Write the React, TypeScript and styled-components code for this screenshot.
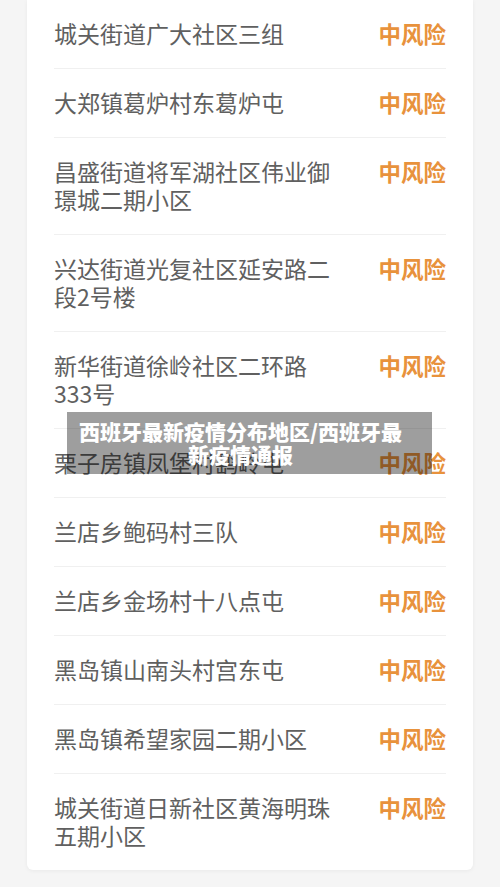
import { createGlobalStyle, styled } from 'styled-components'

const GlobalStyle = createGlobalStyle`
  html, body {
    margin: 0;
    padding: 0;
    background: #f5f5f5;
  }
  body {
    font-family: 'Noto Sans CJK SC', 'Noto Sans', sans-serif;
  }
`

const Page = styled.div`
  position: relative;
  width: 500px;
  height: 887px;
  overflow: hidden;
  background: #f5f5f5;
`

const Card = styled.div`
  margin: 0 27px;
  padding: 0 27px;
  background: #ffffff;
  border-radius: 0 0 6px 6px;
  box-shadow: 0 1px 4px rgba(0, 0, 0, 0.05);
`

const Row = styled.div<{ $last?: boolean }>`
  display: flex;
  justify-content: space-between;
  align-items: flex-start;
  padding: 19px 0 21px;
  border-bottom: ${({ $last }) => ($last ? 'none' : '1px solid #f0f0f0')};
`

const Place = styled.div`
  max-width: 285px;
  font-size: 23px;
  line-height: 28px;
  color: #606060;
`

const Risk = styled.div`
  flex-shrink: 0;
  font-size: 22.5px;
  line-height: 28px;
  font-weight: 700;
  color: #e8923c;
`

const Caption = styled.div`
  position: absolute;
  left: 67px;
  top: 412px;
  width: 365px;
  height: 62px;
  box-sizing: border-box;
  padding: 8px 22px 0 4px;
  background: rgba(0, 0, 0, 0.38);
  color: #ffffff;
  font-size: 21px;
  line-height: 23px;
  font-weight: 900;
  text-align: center;
`

const places = [
  '城关街道广大社区三组',
  '大郑镇葛炉村东葛炉屯',
  '昌盛街道将军湖社区伟业御璟城二期小区',
  '兴达街道光复社区延安路二段2号楼',
  '新华街道徐岭社区二环路333号',
  '栗子房镇凤堡村鹞岭屯',
  '兰店乡鲍码村三队',
  '兰店乡金场村十八点屯',
  '黑岛镇山南头村宫东屯',
  '黑岛镇希望家园二期小区',
  '城关街道日新社区黄海明珠五期小区',
]

export default function App() {
  return (
    <Page>
      <GlobalStyle />
      <Card>
        {places.map((p, i) => (
          <Row key={p} $last={i === places.length - 1}>
            <Place>{p}</Place>
            <Risk>中风险</Risk>
          </Row>
        ))}
      </Card>
      <Caption>西班牙最新疫情分布地区/西班牙最新疫情通报</Caption>
    </Page>
  )
}
